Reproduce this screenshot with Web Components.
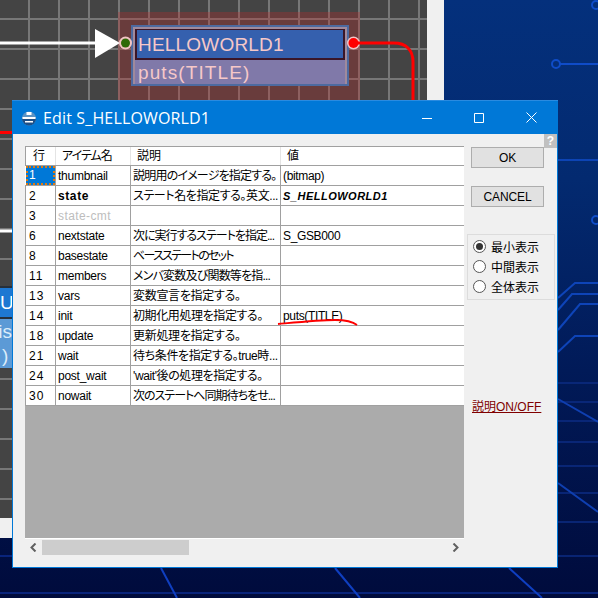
<!DOCTYPE html>
<html>
<head>
<meta charset="utf-8">
<style>
  html, body { margin: 0; padding: 0; width: 598px; height: 598px; overflow: hidden; background: #021a55; }
</style>
</head>
<body>
<desk-top>
  <flow-canvas></flow-canvas>
  <edit-dialog title-text="Edit S_HELLOWORLD1">
    <prop-table></prop-table>
    <side-panel slot="side"></side-panel>
  </edit-dialog>
</desk-top>

<script>
const JP = '"Liberation Sans", "Noto Sans CJK JP", sans-serif';

class DeskTop extends HTMLElement {
  constructor() {
    super();
    this.attachShadow({ mode: 'open' });
    this.shadowRoot.innerHTML = `
      <style>
        :host { display: block; position: relative; width: 598px; height: 598px; overflow: hidden;
          background: linear-gradient(180deg, #04307c 0%, #032a70 30%, #011a58 62%, #000b3c 100%); }
        svg { position: absolute; left: 0; top: 0; }
      </style>
      <svg width="598" height="598" fill="none" stroke="#0f4cc8" stroke-width="2">
        <circle cx="556" cy="64" r="4"/><path d="M560 64H598"/>
        <circle cx="596" cy="5" r="4"/><circle cx="596" cy="220" r="4"/>
        <path d="M558 160H598" stroke="#0d44b4"/>
        <path d="M558 298L575 283H598M558 310L572 294H598M558 330L580 304H598M558 352L575 336H598" stroke="#0e44b8"/>
        <g stroke="#0c2c84" stroke-width="1.5">
          <path d="M558 383H598M558 402H598M558 421H598M558 442H598M558 466H598M558 493H598M558 522H598M558 556H598"/>
        </g>
        <path d="M558 399L598 422M558 483L598 512" stroke="#0f3fb0"/>
        <path d="M0 556H12M0 593H598" stroke="#0c2c90" stroke-width="1.5"/>
        <path d="M161 568L177 598M335 568L360 598M509 568L542 598" stroke="#0f3fc0"/>
      </svg>
      <slot></slot>`;
  }
}

class FlowCanvas extends HTMLElement {
  constructor() {
    super();
    this.attachShadow({ mode: 'open' });
    this.shadowRoot.innerHTML = `
      <style>
        :host { display: block; position: absolute; left: 0; top: 0; width: 444px; height: 538px; background: #f0f0f0; }
        .grid { position: absolute; left: 0; top: 0; width: 427px; height: 518px; background-color: #444;
          background-image: linear-gradient(#777 2px, transparent 2px), linear-gradient(90deg, #777 2px, transparent 2px);
          background-size: 30px 30px; background-position: -2px 18px; }
        .hilite { position: absolute; left: 118px; top: 12px; width: 242px; height: 90px; background: rgba(200, 40, 40, .28); }
        .node { position: absolute; left: 131px; top: 25px; width: 218px; height: 61px; box-sizing: border-box;
          border: 2px solid #4d6aa0; background: #a08a9c; padding: 2px; color: #f6c8c8;
          font: 19px/1 "Liberation Sans", sans-serif; }
        .name { height: 31px; box-sizing: border-box; background: #3560ae; border: 1px solid #3a1628; border-width: 1px 2px 2px 2px;
          line-height: 29px; padding-left: 1px; letter-spacing: .2px; }
        .code { height: 24px; background: #8079a9; line-height: 25px; padding-left: 3px; letter-spacing: 1.1px; }
        svg { position: absolute; left: 0; top: 0; }
        .side { position: absolute; left: 0; top: 286px; width: 12px; height: 82px; background: #5c9ad6; color: #dcecfa;
          font: 19px/1 "Liberation Sans", sans-serif; overflow: hidden; border-top: 2px solid #26303c; box-sizing: border-box; }
        .side .u { height: 31px; box-sizing: border-box; background: #1e78d2; border-bottom: 2px solid #26303c; padding: 5px 0 0 0; color: #fff; }
        .side .n { height: 24px; padding-top: 3px; display: flex; justify-content: flex-end; }
        .side .p { padding-left: 2px; }
      </style>
      <div class="grid"></div>
      <div class="hilite"></div>
      <div class="node">
        <div class="name">HELLOWORLD1</div>
        <div class="code">puts(TITLE)</div>
      </div>
      <div class="side"><div class="u">U</div><div class="n">nis</div><div class="p">)</div></div>
      <svg width="444" height="538" fill="none">
        <path d="M0 43H100" stroke="#fff" stroke-width="3"/>
        <path d="M95 29L120 43L95 58Z" fill="#fff"/>
        <circle cx="125.500" cy="43" r="6.500" fill="#f2c4c4"/><circle cx="125.500" cy="43" r="4.500" fill="#2f6a08"/>
        <circle cx="353.500" cy="43" r="6.500" fill="#f2c4c4"/><circle cx="353.500" cy="43" r="5" fill="#f00"/>
        <path d="M356 43H394C406 43 413 50 413 62V100" stroke="#f00" stroke-width="3"/>
        <path d="M0 132.500H12" stroke="#f00" stroke-width="3"/>
        <path d="M0 231H12" stroke="#fff" stroke-width="3"/>
      </svg>`;
  }
}

class EditDialog extends HTMLElement {
  constructor() {
    super();
    this.attachShadow({ mode: 'open' });
    this.shadowRoot.innerHTML = `
      <style>
        :host { display: flex; flex-direction: column; position: absolute; left: 12px; top: 100px; width: 546px; height: 468px;
          box-sizing: border-box; border: 1px solid #0078d7; border-top: 0; background: #f0f0f0; }
        .bar { height: 34px; margin: 0 -1px; background: #0078d7; border-top: 1px solid #2a8be0; box-sizing: border-box; color: #fff;
          display: flex; align-items: center; padding: 0 1px 0 9px; font: 16px "Open Sans", sans-serif; letter-spacing: .15px; }
        .bar span { margin-left: 6px; flex: 1; }
        .ctl { width: 52px; height: 34px; display: flex; align-items: center; justify-content: center; }
        .body { flex: 1; display: flex; padding: 12px 0 0 12px; position: relative; }
        .help { position: absolute; right: 0; top: 0; width: 13px; height: 14px; background: #c0c0c0; color: #fff;
          font: bold 12px/14px "Liberation Sans", sans-serif; text-align: center; }
      </style>
      <div class="bar">
        <svg width="16" height="16" viewBox="0 0 16 16">
          <circle cx="8" cy="8.500" r="7" fill="#5b93c4"/>
          <path d="M1 8.500a7 7 0 0 0 14 0Z" fill="#1d4f86"/>
          <path d="M5.500 2h5v3h-5zM1.500 7h13v2h-13zM4 11h8v1.500H4z" fill="#fff"/>
        </svg>
        <span></span>
        <div class="ctl"><svg width="10" height="10"><path d="M0 5.500H10" stroke="#fff"/></svg></div>
        <div class="ctl"><svg width="10" height="10"><path d="M.5 .5h9v9h-9z" fill="none" stroke="#fff"/></svg></div>
        <div class="ctl"><svg width="11" height="11"><path d="M.5 .5L10.500 10.500M10.500 .5L.5 10.500" stroke="#fff" fill="none"/></svg></div>
      </div>
      <div class="body">
        <slot></slot>
        <slot name="side"></slot>
        <div class="help">?</div>
      </div>`;
    this.shadowRoot.querySelector('span').textContent = this.getAttribute('title-text');
  }
}

class PropRow extends HTMLElement {
  constructor() {
    super();
    this.attachShadow({ mode: 'open' });
  }

  connectedCallback() {
    this.render();
  }

  render() {
    this.shadowRoot.innerHTML = `
      <style>
        :host { display: grid; grid-template-columns: 30px 75px 150px 1fr; height: 20px; box-sizing: border-box;
          border-bottom: 1px solid #a0a0a0; background: #fff; color: #000; font: 12px/20px ${JP};
          font-feature-settings: "palt"; }
        div { border-left: 1px solid #a0a0a0; padding-left: 2px; white-space: nowrap; overflow: hidden; position: relative; }
        .no { padding-left: 3px; letter-spacing: 1px; }
        .name { letter-spacing: -.25px; }
        .desc { letter-spacing: var(--fit, 0); }
        .val { padding-left: 2px; letter-spacing: -.35px; }
        :host([kind~="head"]) { border-top: 1px solid #a0a0a0; }
        :host([kind~="head"]) div { border-left-color: #e4e4e4; padding-left: 6px; line-height: 18px; }
        :host([kind~="head"]) .no { border-left-color: #a0a0a0; padding-left: 7px; letter-spacing: 0; }
        :host([kind~="head"]) .name { letter-spacing: -1px; }
        :host([kind~="bold"]) .name { font-weight: 700; letter-spacing: .6px; }
        :host([kind~="bold"]) .val { font-weight: 700; font-style: italic; letter-spacing: .5px; font-size: 11px; }
        :host([kind~="off"]) .name { color: #bdbdbd; letter-spacing: .4px; }
        :host([kind~="sel"]) .no { background: #0078d7; color: #fff; border: 2px dotted #e07a10; margin: 0 0 0 1px; padding-left: 1px;
          line-height: 15px; height: 15px; }
      </style>
      <div class="no">${this.getAttribute('no')}</div>
      <div class="name">${this.getAttribute('name')}</div>
      <div class="desc" style="--fit:${this.getAttribute('fit') || 0}px">${this.getAttribute('desc') || ''}</div>
      <div class="val">${this.getAttribute('val') || ''}</div>`;
  }
}

class PropTable extends HTMLElement {
  constructor() {
    super();
    this.attachShadow({ mode: 'open' });
    const rows = [
      ['行', 'アイテム名', '説明', '値', 'head', 0],
      ['1', 'thumbnail', '説明用のイメージを指定する。', '(bitmap)', 'sel', -.8],
      ['2', 'state', 'ステート名を指定する。英文...', 'S_HELLOWORLD1', 'bold', -.4],
      ['3', 'state-cmt', '', '', 'off', 0],
      ['6', 'nextstate', '次に実行するステートを指定...', 'S_GSB000', '', -1],
      ['8', 'basestate', 'ベースステートのセット', '', '', -1.7],
      ['11', 'members', 'メンバ変数及び関数等を指...', '', '', -.8],
      ['13', 'vars', '変数宣言を指定する。', '', '', -.3],
      ['14', 'init', '初期化用処理を指定する。', 'puts(TITLE)', '', -.4],
      ['18', 'update', '更新処理を指定する。', '', '', -.3],
      ['21', 'wait', '待ち条件を指定する。true時...', '', '', -.4],
      ['24', 'post_wait', "'wait'後の処理を指定する。", '', '', -.4],
      ['30', 'nowait', '次のステートへ同期待ちをせ...', '', '', -1]
    ];
    const html = rows.map(r =>
      `<prop-row no="${r[0]}" name="${r[1]}" desc="${r[2]}" val="${r[3]}" kind="${r[4]}" fit="${r[5]}"></prop-row>`).join('');
    this.shadowRoot.innerHTML = `
      <style>
        :host { display: flex; flex-direction: column; width: 439px; height: 409px; position: relative; }
        .rows { height: 393px; box-sizing: border-box; background: #ababab; border-bottom: 1px solid #fff; }
        .scroll { height: 16px; display: flex; align-items: center; background: #f0f0f0; }
        .thumb { width: 147px; height: 15px; background: #cdcdcd; margin-left: 0; }
        .a { width: 17px; height: 15px; display: flex; align-items: center; justify-content: center; }
        .sp { flex: 1; }
        .mark { position: absolute; left: 0; top: 0; pointer-events: none; }
      </style>
      <div class="rows">${html}</div>
      <div class="scroll">
        <div class="a"><svg width="7" height="9"><path d="M5.500 .5L1.500 4.500L5.500 8.500" fill="none" stroke="#606060" stroke-width="2"/></svg></div>
        <div class="thumb"></div>
        <div class="sp"></div>
        <div class="a"><svg width="7" height="9"><path d="M1.500 .5L5.500 4.500L1.500 8.500" fill="none" stroke="#606060" stroke-width="2"/></svg></div>
      </div>
      <svg class="mark" width="439" height="409">
        <path d="M253 178C275 176 295 174 310 174C320 174 327 175 332 179" fill="none" stroke="#f00" stroke-width="1.800"/>
      </svg>`;
  }
}

class DlgButton extends HTMLElement {
  constructor() {
    super();
    this.attachShadow({ mode: 'open' });
    this.shadowRoot.innerHTML = `
      <style>
        :host { display: flex; align-items: center; justify-content: center; width: 73px; height: 21px; box-sizing: border-box;
          border: 1px solid #adadad; background: #e1e1e1; color: #000;
          font: 12px "Liberation Sans", sans-serif; letter-spacing: -.1px; }
      </style>
      <slot></slot>`;
  }
}

class RadioOption extends HTMLElement {
  constructor() {
    super();
    this.attachShadow({ mode: 'open' });
    const dot = this.hasAttribute('checked') ? '<circle cx="6.500" cy="6.500" r="3.500" fill="#333"/>' : '';
    this.shadowRoot.innerHTML = `
      <style>
        :host { display: flex; align-items: center; height: 20px; gap: 5px; color: #000; font: 12px "Noto Sans CJK JP", sans-serif; }
      </style>
      <svg width="13" height="13"><circle cx="6.500" cy="6.500" r="6" fill="#fff" stroke="#555"/>${dot}</svg>
      <slot></slot>`;
  }
}

class SidePanel extends HTMLElement {
  constructor() {
    super();
    this.attachShadow({ mode: 'open' });
    this.shadowRoot.innerHTML = `
      <style>
        :host { display: flex; flex-direction: column; padding-left: 3px; padding-top: 1px; }
        .btns { display: flex; flex-direction: column; gap: 18px; margin-left: 4px; }
        .group { margin-top: 27px; width: 88px; height: 66px; box-sizing: border-box; border: 1px solid #dcdcdc;
          padding: 1px 0 0 5px; }
        .link { margin: 100px 0 0 5px; color: #800000; text-decoration: underline;
          font: 12px/14px ${JP}; font-feature-settings: "palt"; }
      </style>
      <div class="btns">
        <dlg-button>OK</dlg-button>
        <dlg-button>CANCEL</dlg-button>
      </div>
      <div class="group">
        <radio-option checked>最小表示</radio-option>
        <radio-option>中間表示</radio-option>
        <radio-option>全体表示</radio-option>
      </div>
      <div class="link">説明ON/OFF</div>`;
  }
}

customElements.define('dlg-button', DlgButton);
customElements.define('radio-option', RadioOption);
customElements.define('side-panel', SidePanel);
customElements.define('prop-row', PropRow);
customElements.define('prop-table', PropTable);
customElements.define('flow-canvas', FlowCanvas);
customElements.define('edit-dialog', EditDialog);
customElements.define('desk-top', DeskTop);
</script>
</body>
</html>
